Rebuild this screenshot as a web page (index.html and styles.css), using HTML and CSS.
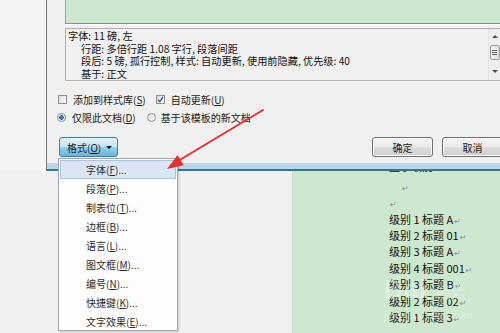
FILE: index.html
```html
<!DOCTYPE html>
<html>
<head>
<meta charset="utf-8">
<link rel="stylesheet" href="styles.css">
</head>
<body>
<div class="upper">
  <div class="gutter"></div>
  <div class="dialog">
    <div class="dlg-body">
      <div class="preview"></div>
      <div class="desc">
        <div class="desc-text">
          <div class="dl">字体: 11 磅, 左</div>
          <div class="dl ind">行距: 多倍行距 1.08 字行, 段落间距</div>
          <div class="dl ind">段后: 5 磅, 孤行控制, 样式: 自动更新, 使用前隐藏, 优先级: 40</div>
          <div class="dl ind">基于: 正文</div>
        </div>
        <div class="vscroll">
          <span class="arr up"></span>
          <span class="thumb"><i></i><i></i><i></i></span>
          <span class="arr down"></span>
        </div>
      </div>
      <div class="row checks">
        <div class="opt"><span class="cb"></span><span>添加到样式库(<u>S</u>)</span></div>
        <div class="opt"><span class="cb"><svg width="7" height="7" viewBox="0 0 7 7"><path d="M0.8 3.6 L2.7 5.6 L6.2 0.8" fill="none" stroke="#2d4f9e" stroke-width="1.3"/></svg></span><span>自动更新(<u>U</u>)</span></div>
      </div>
      <div class="row radios">
        <div class="opt r1"><span class="rb on"></span><span>仅限此文档(<u>D</u>)</span></div>
        <div class="opt r2"><span class="rb"></span><span>基于该模板的新文档</span></div>
      </div>
      <div class="row buttons">
        <div class="btn fmt"><span>格式(<u>O</u>)</span><span class="caret"></span></div>
        <div class="spacer"></div>
        <div class="btn std">确定</div>
        <div class="btn std">取消</div>
      </div>
    </div>
    <div class="band"></div>
    <div class="band-line"></div>
  </div>
</div>
<div class="lower">
  <div class="wsbg"></div>
  <div class="page">
    <div class="doc">
      <div class="pl first">显示级别<span class="pm">↵</span></div>
      <div class="pl ind2"><span class="pm">↵</span></div>
      <div class="pl"><span class="pm">↵</span></div>
      <div class="pl">级别 1 标题 A<span class="pm">↵</span></div>
      <div class="pl">级别 2 标题 01<span class="pm">↵</span></div>
      <div class="pl">级别 3 标题 A<span class="pm">↵</span></div>
      <div class="pl">级别 4 标题 001<span class="pm">↵</span></div>
      <div class="pl">级别 3 标题 B<span class="pm">↵</span></div>
      <div class="pl">级别 2 标题 02<span class="pm">↵</span></div>
      <div class="pl">级别 1 标题 3<span class="pm">↵</span></div>
      <div class="pl"><span class="pm">↵</span></div>
    </div>
  </div>
</div>

<div class="watermark">
  <span class="wm-big">Bai</span><span class="wm-cn">经验</span>
  <div class="wm-url">jingyan.baidu.com</div>
</div>

<div class="menu">
  <div class="mi hot">字体(<u>F</u>)...</div>
  <div class="mi">段落(<u>P</u>)...</div>
  <div class="mi">制表位(<u>T</u>)...</div>
  <div class="mi">边框(<u>B</u>)...</div>
  <div class="mi">语言(<u>L</u>)...</div>
  <div class="mi">图文框(<u>M</u>)...</div>
  <div class="mi">编号(<u>N</u>)...</div>
  <div class="mi">快捷键(<u>K</u>)...</div>
  <div class="mi">文字效果(<u>E</u>)...</div>
</div>

<svg class="arrow" width="500" height="333" viewBox="0 0 500 333">
  <line x1="263" y1="110" x2="178" y2="161" stroke="#e8302e" stroke-width="2" stroke-linecap="round"/>
  <polygon points="167,169 177.6,155 183.8,165.2" fill="#e8302e"/>
</svg>
</body>
</html>
```

FILE: styles.css
```css
* { box-sizing: border-box; margin: 0; padding: 0; }
html, body { width: 500px; height: 333px; overflow: hidden; }
body {
  position: relative;
  background: #f0f0f0;
  font-family: "Noto Sans CJK SC", "Noto Sans", sans-serif;
  font-size: 10px;
  color: #1b1b1b;
}
u { text-decoration: underline; text-underline-offset: 1px; }

.upper { display: flex; height: 171px; }
.gutter { width: 46px; background: #f4f4f4; }
.dialog { flex: 1; min-width: 0; display: flex; flex-direction: column; border-left: 1px solid #777; }
.dlg-body { height: 163px; background: #f0f0f0; padding-left: 11px; overflow: hidden; }
.band { height: 6px; background: #bcd4ec; }
.band-line { height: 2px; background: #2f7b8b; }

.preview {
  height: 24px; margin-left: 7px;
  background: #cce8cf;
  border-left: 1px solid #a3a3a3;
  border-bottom: 1px solid #8c8c8c;
  box-shadow: 0 1px 0 #fff;
}
.desc {
  display: flex; height: 53px; margin: 4px 0 0 7px;
  border: 1px solid #adadad; border-right: none;
  box-shadow: 0 1px 0 #fff;
}
.desc-text { flex: 1; min-width: 0; padding: 1px 0 0 2px; line-height: 12.5px; font-size: 10.2px; color: #111; white-space: nowrap; overflow: hidden; }
.ind { padding-left: 13px; }

.vscroll {
  width: 12px; flex-shrink: 0;
  display: flex; flex-direction: column; align-items: center;
  background: #eeeeee; border-left: 1px solid #e2e2e2;
  padding-top: 6px;
}
.arr { width: 0; height: 0; border-left: 3px solid transparent; border-right: 3px solid transparent; }
.arr.up { border-bottom: 3px solid #4a4a4a; }
.arr.down { border-top: 3px solid #4a4a4a; margin-top: 10px; }
.thumb {
  margin-top: 7px; width: 10px; height: 15px;
  border: 1px solid #999; border-radius: 2px;
  background: linear-gradient(90deg, #f6f6f6, #dcdcdc);
  display: flex; flex-direction: column; align-items: center; justify-content: center; gap: 1px;
}
.thumb i { display: block; width: 5px; height: 1px; background: #666; }

.row { display: flex; align-items: center; }
.checks { margin-top: 11px; height: 14px; gap: 10px; }
.opt { display: flex; align-items: center; gap: 6px; white-space: nowrap; }
.cb {
  width: 9px; height: 9px; border: 1px solid #8e8f8f;
  background: linear-gradient(135deg, #dadada, #fdfdfd);
  display: flex; align-items: center; justify-content: center;
}
.radios { margin-top: 4px; height: 14px; }
.r1 { margin-left: -1px; }
.r2 { margin-left: 11px; gap: 5px; }
.rb {
  width: 9px; height: 9px; border-radius: 50%;
  border: 1px solid #8e8f8f;
  background: linear-gradient(135deg, #d8d8d8, #fdfdfd);
}
.rb.on { background: radial-gradient(circle, #2a7fd0 0 28%, #0d4a8e 40%, #e6e6e6 48%, #fafafa 100%); }

.buttons { margin-top: 13px; height: 20px; }
.btn { height: 20px; border-radius: 3px; display: flex; align-items: center; white-space: nowrap; }
.fmt {
  margin-left: 1px; width: 59px; padding-left: 7px; gap: 5px;
  border: 1px solid #3c7fb1;
  background: linear-gradient(#e4f3fc 0%, #c4e5f6 50%, #98d1ef 51%, #68b3db 100%);
}
.caret { width: 0; height: 0; border-left: 3px solid transparent; border-right: 3px solid transparent; border-top: 3px solid #111; }
.spacer { flex: 1; }
.std {
  width: 61px; justify-content: center; margin-left: 9px;
  border: 1px solid #707070;
  background: linear-gradient(#f2f2f2 0%, #ebebeb 50%, #dddddd 51%, #cfcfcf 100%);
  box-shadow: inset 0 0 0 1px #fbfbfb;
}
.std:last-child { margin-right: -3px; }

.lower { display: flex; height: 162px; }
.wsbg { width: 293px; background: #f0f0f0; border-right: 1px solid #d6d6d6; }
.page { flex: 1; background: #cce8cf; overflow: hidden; padding-left: 96px; }
.doc { margin-top: -9.5px; font-size: 11px; color: #111; white-space: nowrap; }
.pl { height: 16.4px; line-height: 16.4px; overflow: visible; }
.pl.first { line-height: 9.5px; }
.ind2 { padding-left: 12px; }
.pm { font-family: "DejaVu Sans", sans-serif; font-size: 8px; line-height: 0; color: #8a8a9a; margin-left: 1px; }

.watermark { position: absolute; left: 384px; top: 276px; color: rgba(255,255,255,0.35); font-family: "Liberation Sans", sans-serif; pointer-events: none; line-height: 1; }
.wm-big { font-size: 26px; font-weight: bold; letter-spacing: 1px; }
.wm-cn { font-family: "Noto Sans CJK SC", sans-serif; font-size: 15px; margin-left: 8px; }
.wm-url { font-size: 11px; margin-top: 8px; }

.menu {
  position: absolute; left: 58px; top: 158px; width: 120px; height: 173px;
  background: #fdfdfd; border: 1px solid #a7a7a7; padding: 1px;
  box-shadow: 1px 1px 2px rgba(0,0,0,0.18);
}
.mi { height: 19px; line-height: 19px; padding-left: 26px; color: #2b2b2b; white-space: nowrap; }
.mi.hot { background: #dbe6f5; border: 1px solid #a9c3e6; line-height: 17px; padding-left: 25px; }

.arrow { position: absolute; left: 0; top: 0; pointer-events: none; }
```
